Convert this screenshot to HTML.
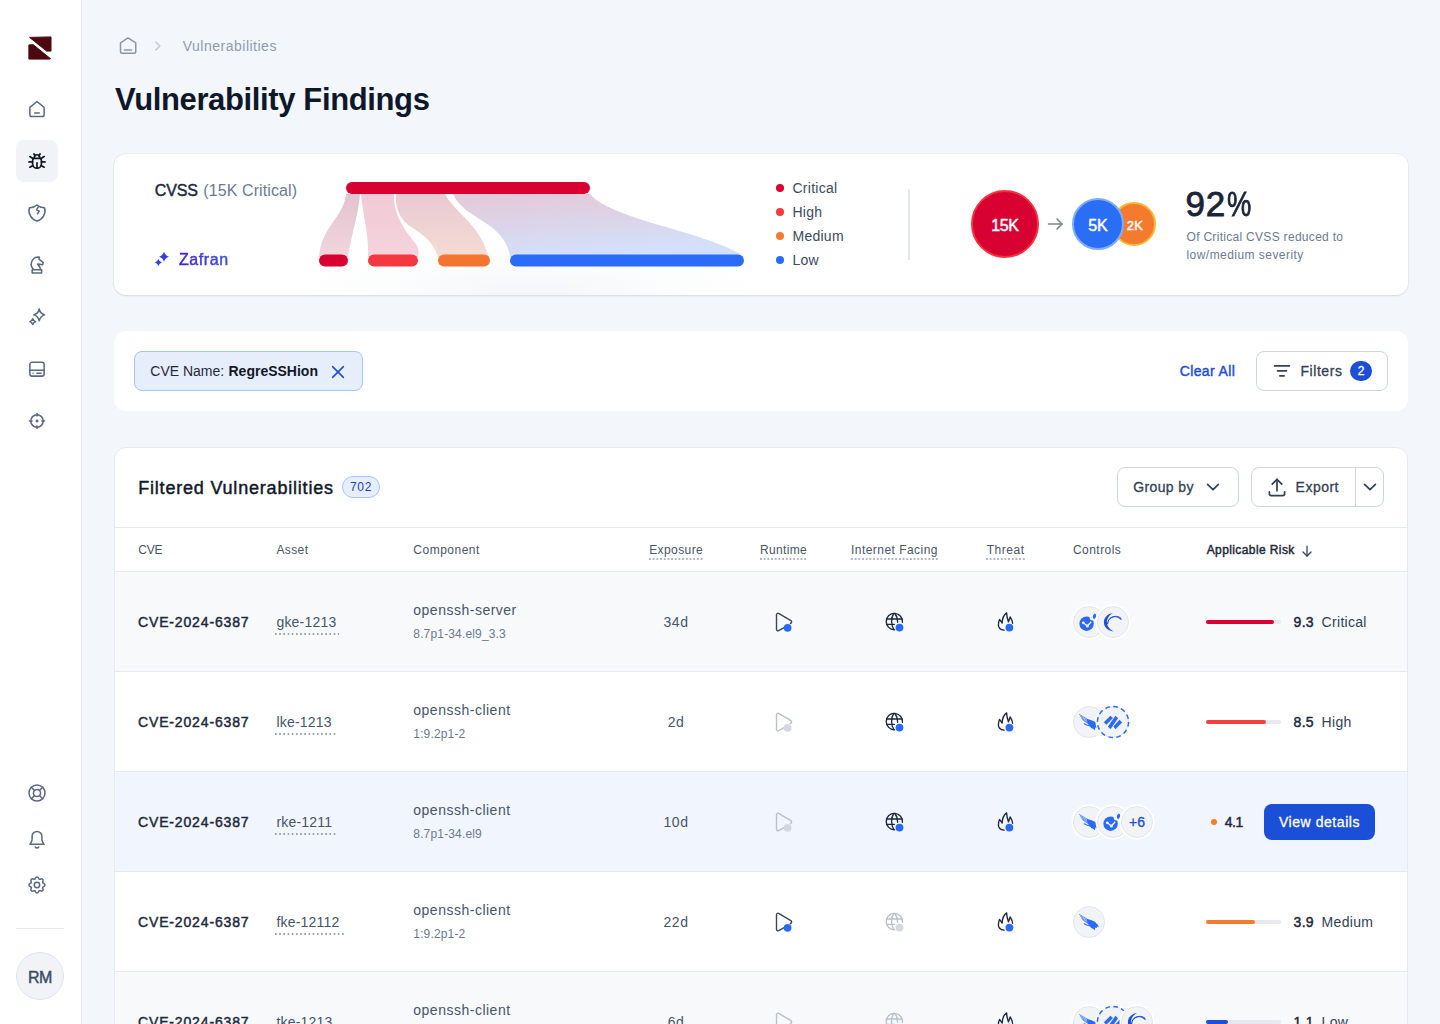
<!DOCTYPE html>
<html><head><meta charset="utf-8"><title>Vulnerability Findings</title>
<style>
html,body{margin:0;padding:0;}
body{width:1440px;height:1024px;overflow:hidden;position:relative;background:#f3f6fa;font-family:"Liberation Sans", sans-serif;}
.a{position:absolute;box-sizing:content-box;}
.t{position:absolute;line-height:1;white-space:nowrap;}
.card{background:#fff;border:1px solid #e8ebf0;border-radius:12px;box-shadow:0 1px 2px rgba(16,24,40,0.04);}
.circ{border-radius:50%;}
.ctl{width:30px;height:30px;background:#f1f3f6;border:1px solid #e3e6eb;box-shadow:0 0 0 1.5px #fff;}
.dots{background-image:linear-gradient(90deg,#aeb6c2 0,#aeb6c2 1.8px,transparent 1.8px);background-size:3.7px 2px;}
.dots2{background-image:linear-gradient(90deg,#9aa3b2 0,#9aa3b2 2px,transparent 2px);background-size:4.2px 2px;}
</style></head><body>
<div class="a" style="left:0;top:0;width:81px;height:1024px;background:#fff;border-right:1px solid #e6e9ef"></div>
<svg class="a" style="left:28px;top:36px;" width="24" height="24" viewBox="0 0 24 24" fill="none"><g fill="#4b0810" stroke="#4b0810" stroke-width="1" stroke-linejoin="round"><path d="M1.6 1.4 L23 0.9 L23 15.1 L18.6 15.1 Z"/><path d="M0.9 8.9 L5.3 8.7 L22.5 22.7 L21.6 23.1 L0.9 23.1 Z"/></g></svg>
<svg class="a" style="left:27px;top:98.5px;" width="20" height="20" viewBox="0 0 20 20" fill="none"><g stroke="#5a6882" stroke-width="1.7" stroke-linecap="round" stroke-linejoin="round" transform="translate(10 10) scale(0.89) translate(-12 -12)"><path d="M4 10.2 L12 3.6 L20 10.2 V18.5 A2 2 0 0 1 18 20.5 H6 A2 2 0 0 1 4 18.5 Z"/><path d="M9.5 16.5 H14.5"/></g></svg>
<div class="a" style="left:16px;top:140px;width:42px;height:42px;border-radius:8px;background:#f1f3f7"></div>
<svg class="a" style="left:27px;top:151px;" width="20" height="20" viewBox="0 0 20 20" fill="none"><g stroke="#111827" stroke-width="1.9" stroke-linecap="round" stroke-linejoin="round" transform="translate(10 10) scale(0.89) translate(-12 -12)"><path d="M9 8.5v-0.5a3 3 0 0 1 6 0v0.5"/><path d="M8.5 4 L10 6"/><path d="M15.5 4 L14 6"/><path d="M8 9h8a6 6 0 0 1 1 3v3a5 5 0 0 1 -10 0v-3a6 6 0 0 1 1 -3"/><path d="M3 13h4"/><path d="M17 13h4"/><path d="M12 20v-6"/><path d="M4 19l3.35 -2"/><path d="M20 19l-3.35 -2"/><path d="M4 7l3.75 2.4"/><path d="M20 7l-3.75 2.4"/></g></svg>
<svg class="a" style="left:27px;top:203px;" width="20" height="20" viewBox="0 0 20 20" fill="none"><g stroke="#5a6882" stroke-width="1.7" stroke-linecap="round" stroke-linejoin="round" transform="translate(10 10) scale(0.89) translate(-12 -12)"><path d="M12 3a12 12 0 0 0 8.5 3a12 12 0 0 1 -8.5 15a12 12 0 0 1 -8.5 -15a12 12 0 0 0 8.5 -3"/><path d="M13.5 5 L11.5 8.5 L14.5 10 L12.5 13"/></g></svg>
<svg class="a" style="left:27px;top:255px;" width="20" height="20" viewBox="0 0 20 20" fill="none"><g stroke="#5a6882" stroke-width="1.7" stroke-linecap="round" stroke-linejoin="round" transform="translate(10 10) scale(0.89) translate(-12 -12)"><path d="M7.6 16.3 C5.6 14 5 12 5.6 10 C6.5 5.5 10 3.2 13.1 3 L14.8 3.3 L14.2 5.4 L19 9.3 L18.5 11.6 L12.6 10.8 L15.1 14.2 L15.8 16.5"/><path d="M6.6 17.3 H17.2 V21 H6.6 Z"/></g></svg>
<svg class="a" style="left:27px;top:307px;" width="20" height="20" viewBox="0 0 20 20" fill="none"><g stroke="#5a6882" stroke-width="1.7" stroke-linecap="round" stroke-linejoin="round" transform="translate(10 10) scale(0.89) translate(-12 -12)"><path d="M14.5 3 Q15.6 8.2 20.6 9.6 Q15.6 11 14.5 16.2 Q13.4 11 8.4 9.6 Q13.4 8.2 14.5 3Z"/><path d="M7.2 14 Q7.9 16.4 10.4 17.2 Q7.9 18 7.2 20.4 Q6.5 18 4 17.2 Q6.5 16.4 7.2 14Z"/></g></svg>
<svg class="a" style="left:27px;top:359px;" width="20" height="20" viewBox="0 0 20 20" fill="none"><g stroke="#5a6882" stroke-width="1.7" stroke-linecap="round" stroke-linejoin="round" transform="translate(10 10) scale(0.89) translate(-12 -12)"><path d="M6.5 4.5 H17.5 A2.5 2.5 0 0 1 20 7 V17.5 A2.5 2.5 0 0 1 17.5 20 H6.5 A2.5 2.5 0 0 1 4 17.5 V7 A2.5 2.5 0 0 1 6.5 4.5Z"/><path d="M4 13.5 H20"/><path d="M7.5 16.8 h0.01"/><path d="M12 16.8 H16.5"/></g></svg>
<svg class="a" style="left:27px;top:411px;" width="20" height="20" viewBox="0 0 20 20" fill="none"><g stroke="#5a6882" stroke-width="1.7" stroke-linecap="round" stroke-linejoin="round" transform="translate(10 10) scale(0.89) translate(-12 -12)"><circle cx="12" cy="12" r="7"/><path d="M12 3.5v3"/><path d="M12 17.5v3"/><path d="M3.5 12h3"/><path d="M17.5 12h3"/><circle cx="12" cy="12" r="0.8" fill="#5a6882"/></g></svg>
<svg class="a" style="left:27px;top:783px;" width="20" height="20" viewBox="0 0 20 20" fill="none"><g stroke="#5a6882" stroke-width="1.7" stroke-linecap="round" stroke-linejoin="round" transform="translate(10 10) scale(0.89) translate(-12 -12)"><circle cx="12" cy="12" r="9"/><circle cx="12" cy="12" r="4"/><path d="M5.6 5.6l3.6 3.6"/><path d="M14.8 14.8l3.6 3.6"/><path d="M14.8 9.2l3.6 -3.6"/><path d="M5.6 18.4l3.6 -3.6"/></g></svg>
<svg class="a" style="left:27px;top:829px;" width="20" height="20" viewBox="0 0 20 20" fill="none"><g stroke="#5a6882" stroke-width="1.7" stroke-linecap="round" stroke-linejoin="round" transform="translate(10 10) scale(0.89) translate(-12 -12)"><path d="M6.5 9a5.5 5.5 0 0 1 11 0v3.5c0 2 1 3.5 2.5 5.5H4c1.5 -2 2.5 -3.5 2.5 -5.5Z"/><path d="M10 21a2.5 2.5 0 0 0 4 0"/></g></svg>
<svg class="a" style="left:27px;top:875px;" width="20" height="20" viewBox="0 0 20 20" fill="none"><g stroke="#5a6882" stroke-width="1.7" stroke-linecap="round" stroke-linejoin="round" transform="translate(10 10) scale(0.89) translate(-12 -12)"><path d="M10.325 4.317c.426 -1.756 2.924 -1.756 3.35 0a1.724 1.724 0 0 0 2.573 1.066c1.543 -.94 3.31 .826 2.37 2.37a1.724 1.724 0 0 0 1.065 2.572c1.756 .426 1.756 2.924 0 3.35a1.724 1.724 0 0 0 -1.066 2.573c.94 1.543 -.826 3.31 -2.37 2.37a1.724 1.724 0 0 0 -2.572 1.065c-.426 1.756 -2.924 1.756 -3.35 0a1.724 1.724 0 0 0 -2.573 -1.066c-1.543 .94 -3.31 -.826 -2.37 -2.37a1.724 1.724 0 0 0 -1.065 -2.572c-1.756 -.426 -1.756 -2.924 0 -3.35a1.724 1.724 0 0 0 1.066 -2.573c-.94 -1.543 .826 -3.31 2.37 -2.37c1 .608 2.296 .07 2.572 -1.065z"/><circle cx="12" cy="12" r="3"/></g></svg>
<div class="a" style="left:16px;top:928px;width:48px;height:1px;background:#e5e7eb"></div>
<div class="a" style="left:16px;top:952px;width:46px;height:46px;border-radius:50%;background:#f1f3f6;border:1px solid #e2e5ea"></div>
<div class="t" style="left:-160px;width:400px;text-align:center;top:969.76px;font-size:16px;color:#3e4c63;font-weight:normal;letter-spacing:-0.4px;-webkit-text-stroke:0.45px currentColor;">RM</div>
<svg class="a" style="left:118px;top:35px;" width="20" height="20" viewBox="0 0 20 20" fill="none"><g stroke="#8a96a8" stroke-width="1.5" stroke-linecap="round" stroke-linejoin="round"><path d="M2.5 7.8 L10 2.85 L17.75 7.8 V16.5 Q17.75 18.25 16 18.25 H4.25 Q2.5 18.25 2.5 16.5 Z"/><path d="M6.5 15 H13.5"/></g></svg>
<svg class="a" style="left:150px;top:36px;" width="16" height="20" viewBox="0 0 16 20" fill="none"><path d="M5.75 6.25 L9.9 10 L5.75 13.9" stroke="#c5ccd6" stroke-width="1.5" stroke-linecap="round" stroke-linejoin="round"/></svg>
<div class="t" style="left:182.75px;top:39.15px;font-size:14px;color:#8f9bb0;font-weight:normal;letter-spacing:0.5px;">Vulnerabilities</div>
<div class="t" style="left:115px;top:83.96px;font-size:31px;color:#0f172a;font-weight:bold;letter-spacing:-0.37px;">Vulnerability Findings</div>
<div class="a" style="left:114px;top:154px;width:1294px;height:141px;background:#fff;border-radius:12px;box-shadow:0 0 0 1px rgba(30,40,70,0.035),0 1px 2px rgba(30,40,70,0.09);"></div>
<div class="a" style="left:290px;top:236px;width:480px;height:59px;background:radial-gradient(ellipse 50% 100% at 50% 100%, rgba(236,239,244,0.6), rgba(243,245,248,0.3) 55%, rgba(255,255,255,0) 100%);"></div>
<div class="t" style="left:154.8px;top:183.06px;font-size:16px;color:#1e293b;font-weight:normal;letter-spacing:-0.15px;-webkit-text-stroke:0.45px currentColor;">CVSS</div>
<div class="t" style="left:203.3px;top:183.06px;font-size:16px;color:#6b7a90;font-weight:normal;letter-spacing:0.1px;">(15K Critical)</div>
<svg class="a" style="left:154px;top:251px;" width="16" height="16" viewBox="0 0 16 16" fill="none"><defs><linearGradient id="zg" x1="0" y1="1" x2="1" y2="0"><stop offset="0" stop-color="#3b3bf0"/><stop offset="1" stop-color="#2f3fe0"/></linearGradient></defs><path d="M10 0.80 Q11.20 4.60 15.00 5.8 Q11.20 7.00 10 10.80 Q8.80 7.00 5.00 5.8 Q8.80 4.60 10 0.80Z" fill="url(#zg)"/><path d="M4.4 8.10 Q5.24 10.76 7.90 11.6 Q5.24 12.44 4.4 15.10 Q3.56 12.44 0.90 11.6 Q3.56 10.76 4.4 8.10Z" fill="url(#zg)"/></svg>
<div class="t" style="left:178.9px;top:252.06px;font-size:16px;color:#3b2fd6;font-weight:normal;letter-spacing:0.6px;-webkit-text-stroke:0.45px currentColor;background:linear-gradient(90deg,#4a1fd0,#2f55e0);-webkit-background-clip:text;background-clip:text;color:transparent;">Zafran</div>
<svg class="a" style="left:319px;top:182px;" width="430" height="90" viewBox="0 0 430 90" fill="none"><defs>
<linearGradient id="f1" x1="0" y1="0" x2="0" y2="1"><stop offset="0" stop-color="#e2c3cf"/><stop offset="1" stop-color="#f1d6de"/></linearGradient>
<linearGradient id="f2" x1="0" y1="0" x2="0" y2="1"><stop offset="0" stop-color="#f0c9d5"/><stop offset="1" stop-color="#f6d3dc"/></linearGradient>
<linearGradient id="f3" x1="0" y1="0" x2="0" y2="1"><stop offset="0" stop-color="#e8c9d2"/><stop offset="1" stop-color="#f5dcd3"/></linearGradient>
<linearGradient id="f4" x1="0" y1="0" x2="0.3" y2="1"><stop offset="0" stop-color="#e5c8d6"/><stop offset="1" stop-color="#d3e0fb"/></linearGradient>
<linearGradient id="sh" x1="0" y1="0" x2="0" y2="1"><stop offset="0" stop-color="#ffffff" stop-opacity="0"/><stop offset="1" stop-color="#eef0f5" stop-opacity="1"/></linearGradient>
</defs>
<path d="M27 12 L41 12 C40 30 33 50 29 75 L0 75 C2 45 25 35 27 12Z" fill="url(#f1)"/>
<path d="M42 12 L75 12 C74 30 83 45 97 62 C100 67 100 72 99 75 L49 75 C50 50 44 35 42 12Z" fill="url(#f2)"/>
<path d="M77 12 L126 12 C136 30 155 40 165 62 L170 75 L119 75 C115 60 103 52 92 45 C80 37 76 25 77 12Z" fill="url(#f3)"/>
<path d="M134 12 L271 12 C285 30 340 42 380 55 C410 65 422 72 425 75 L191 75 C189 60 180 50 168 42 C150 30 140 25 134 12Z" fill="url(#f4)"/>
<rect x="27" y="0" width="244" height="12" rx="6" fill="#d90032"/>
<rect x="0" y="72.5" width="29" height="12" rx="6" fill="#d90032"/>
<rect x="49" y="72.5" width="50" height="12" rx="6" fill="#f5383f"/>
<rect x="119" y="72.5" width="52" height="12" rx="6" fill="#f47530"/>
<rect x="191" y="72.5" width="234" height="12" rx="6" fill="#2a6cf8"/>
</svg>
<div class="a" style="left:776px;top:184px;width:8px;height:8px;border-radius:50%;background:#d90032"></div>
<div class="t" style="left:792.5px;top:181.15px;font-size:14px;color:#3d4a5c;font-weight:normal;letter-spacing:0.25px;">Critical</div>
<div class="a" style="left:776px;top:208px;width:8px;height:8px;border-radius:50%;background:#f5383f"></div>
<div class="t" style="left:792.5px;top:205.15px;font-size:14px;color:#3d4a5c;font-weight:normal;letter-spacing:0.25px;">High</div>
<div class="a" style="left:776px;top:232px;width:8px;height:8px;border-radius:50%;background:#f47a2e"></div>
<div class="t" style="left:792.5px;top:229.15px;font-size:14px;color:#3d4a5c;font-weight:normal;letter-spacing:0.25px;">Medium</div>
<div class="a" style="left:776px;top:256px;width:8px;height:8px;border-radius:50%;background:#2a6cf8"></div>
<div class="t" style="left:792.5px;top:253.15px;font-size:14px;color:#3d4a5c;font-weight:normal;letter-spacing:0.25px;">Low</div>
<div class="a" style="left:908px;top:189px;width:2px;height:71px;background:#e3e7ee"></div>
<div class="a circ" style="left:971px;top:190px;width:64px;height:64px;background:#d90032;border:2px solid #f5333f;"></div>
<div class="t" style="left:805px;width:400px;text-align:center;top:217.76px;font-size:16px;color:#fff;font-weight:normal;letter-spacing:-0.4px;-webkit-text-stroke:0.45px currentColor;">15K</div>
<svg class="a" style="left:1045px;top:214px;" width="20" height="20" viewBox="0 0 20 20" fill="none"><g stroke="#7b8796" stroke-width="1.6" stroke-linecap="round" stroke-linejoin="round"><path d="M3.5 10 H17"/><path d="M12 5 L17 10 L12 15"/></g></svg>
<div class="a circ" style="left:1112px;top:202px;width:40px;height:40px;background:#f47a2e;border:2px solid #fbb731;"></div>
<div class="a circ" style="left:1072px;top:198px;width:48px;height:48px;background:#2a6ef6;border:2px solid #7eadfb;"></div>
<div class="t" style="left:898px;width:400px;text-align:center;top:217.76px;font-size:16px;color:#fff;font-weight:normal;letter-spacing:0px;-webkit-text-stroke:0.45px currentColor;">5K</div>
<div class="t" style="left:935px;width:400px;text-align:center;top:219.00px;font-size:13px;color:#fff;font-weight:normal;letter-spacing:0.3px;-webkit-text-stroke:0.45px currentColor;">2K</div>
<div class="t" style="left:1185.6px;top:186.27px;font-size:35px;color:#1b2436;font-weight:normal;letter-spacing:0.6px;-webkit-text-stroke:0.8px currentColor;">92<span style="display:inline-block;transform:scaleX(0.78);transform-origin:0 50%;margin-left:1px">%</span></div>
<div class="t" style="left:1186.5px;top:231.14px;font-size:12px;color:#6b7a90;font-weight:normal;letter-spacing:0.3px;">Of Critical CVSS reduced to</div>
<div class="t" style="left:1186.5px;top:249.14px;font-size:12px;color:#6b7a90;font-weight:normal;letter-spacing:0.45px;">low/medium severity</div>
<div class="a" style="left:114px;top:331px;width:1294px;height:80px;background:#fff;border-radius:12px;"></div>
<div class="a" style="left:134px;top:351px;width:227px;height:38px;border-radius:8px;background:#e6eefc;border:1px solid #a6c6f7"></div>
<div class="t" style="left:150.3px;top:364.15px;font-size:14px;color:#1e293b;font-weight:normal;letter-spacing:0.0px;white-space:pre">CVE Name: </div>
<div class="t" style="left:228.5px;top:364.15px;font-size:14px;color:#111827;font-weight:bold;letter-spacing:0px;">RegreSSHion</div>
<svg class="a" style="left:329.6px;top:363.6px;" width="16" height="16" viewBox="0 0 16 16" fill="none"><g stroke="#1d4ed8" stroke-width="1.55" stroke-linecap="round"><path d="M2.6 2.6 L13.4 13.4"/><path d="M13.4 2.6 L2.6 13.4"/></g></svg>
<div class="t" style="left:1179.7px;top:363.95px;font-size:14px;color:#1d4ed8;font-weight:normal;letter-spacing:0.39px;-webkit-text-stroke:0.45px currentColor;">Clear All</div>
<div class="a" style="left:1256px;top:351px;width:130px;height:38px;border-radius:8px;background:#fff;border:1px solid #cfd5de"></div>
<svg class="a" style="left:1272px;top:362px;" width="20" height="18" viewBox="0 0 20 18" fill="none"><g stroke="#334155" stroke-width="1.8" stroke-linecap="round"><path d="M2.6 3.8 H17.4"/><path d="M5.6 8.8 H14.4"/><path d="M7.9 13.8 H12.1"/></g></svg>
<div class="t" style="left:1300.5px;top:363.95px;font-size:14px;color:#334155;font-weight:normal;letter-spacing:0.55px;-webkit-text-stroke:0.3px currentColor;">Filters</div>
<div class="a" style="left:1350px;top:361px;width:22px;height:20px;border-radius:10px;background:#1d4ed8"></div>
<div class="t" style="left:1161px;width:400px;text-align:center;top:365.34px;font-size:12px;color:#fff;font-weight:normal;letter-spacing:0px;-webkit-text-stroke:0.3px currentColor;">2</div>
<div class="a" style="left:114px;top:447px;width:1292px;height:600px;background:#fff;border:1px solid #e6e9ee;border-radius:12px;"></div>
<div class="t" style="left:138.2px;top:478.76px;font-size:18px;color:#111827;font-weight:normal;letter-spacing:0.8px;-webkit-text-stroke:0.45px currentColor;">Filtered Vulnerabilities</div>
<div class="a" style="left:342px;top:476px;width:36px;height:20px;border-radius:11px;background:#e6eefc;border:1px solid #a6c6f7"></div>
<div class="t" style="left:161px;width:400px;text-align:center;top:481.04px;font-size:12px;color:#1e3fae;font-weight:normal;letter-spacing:0.6px;">702</div>
<div class="a" style="left:1117px;top:467px;width:120px;height:38px;border-radius:8px;background:#fff;border:1px solid #cfd5de"></div>
<div class="t" style="left:1133.3px;top:480.15px;font-size:14px;color:#334155;font-weight:normal;letter-spacing:0.36px;-webkit-text-stroke:0.3px currentColor;">Group by</div>
<svg class="a" style="left:1203px;top:477px;" width="20" height="20" viewBox="0 0 20 20" fill="none"><g stroke="#334155" stroke-width="1.9" stroke-linecap="round" stroke-linejoin="round" transform="translate(10 10) scale(0.9) translate(-12 -12)"><path d="M6 9l6 6l6 -6"/></g></svg>
<div class="a" style="left:1251px;top:467px;width:131px;height:38px;border-radius:8px;background:#fff;border:1px solid #cfd5de"></div>
<div class="a" style="left:1355px;top:468px;width:1px;height:38px;background:#cfd5de"></div>
<svg class="a" style="left:1266.8px;top:476.8px;" width="20" height="20" viewBox="0 0 20 20" fill="none"><g stroke="#334155" stroke-width="1.8" stroke-linecap="round" stroke-linejoin="round" transform="translate(10 10) scale(0.95) translate(-12 -12)"><path d="M4 17v2a2 2 0 0 0 2 2h12a2 2 0 0 0 2 -2v-2"/><path d="M7 9l5 -5l5 5"/><path d="M12 4v12"/></g></svg>
<div class="t" style="left:1295.6px;top:480.15px;font-size:14px;color:#334155;font-weight:normal;letter-spacing:0.49px;-webkit-text-stroke:0.3px currentColor;">Export</div>
<svg class="a" style="left:1360px;top:477px;" width="20" height="20" viewBox="0 0 20 20" fill="none"><g stroke="#334155" stroke-width="1.9" stroke-linecap="round" stroke-linejoin="round" transform="translate(10 10) scale(0.9) translate(-12 -12)"><path d="M6 9l6 6l6 -6"/></g></svg>
<div class="a" style="left:115px;top:527px;width:1292px;height:1px;background:#e6e9ee"></div>
<div class="a" style="left:115px;top:571px;width:1292px;height:1px;background:#e6e9ee"></div>
<div class="t" style="left:138.3px;top:544.04px;font-size:12px;color:#4a5568;font-weight:normal;letter-spacing:-0.2px;">CVE</div>
<div class="t" style="left:276.4px;top:544.04px;font-size:12px;color:#4a5568;font-weight:normal;letter-spacing:0.4px;">Asset</div>
<div class="t" style="left:413.3px;top:544.04px;font-size:12px;color:#4a5568;font-weight:normal;letter-spacing:0.5px;">Component</div>
<div class="t" style="left:649.2px;top:544.04px;font-size:12px;color:#4a5568;font-weight:normal;letter-spacing:0.41px;">Exposure</div><div class="a dots" style="left:648.7px;top:558px;width:55px;height:2px;"></div>
<div class="t" style="left:760px;top:544.04px;font-size:12px;color:#4a5568;font-weight:normal;letter-spacing:0.33px;">Runtime</div><div class="a dots" style="left:759.5px;top:558px;width:48px;height:2px;"></div>
<div class="t" style="left:851px;top:544.04px;font-size:12px;color:#4a5568;font-weight:normal;letter-spacing:0.46px;">Internet Facing</div><div class="a dots" style="left:850.5px;top:558px;width:88px;height:2px;"></div>
<div class="t" style="left:986.7px;top:544.04px;font-size:12px;color:#4a5568;font-weight:normal;letter-spacing:0.55px;">Threat</div><div class="a dots" style="left:986.2px;top:558px;width:39px;height:2px;"></div>
<div class="t" style="left:1073px;top:544.04px;font-size:12px;color:#4a5568;font-weight:normal;letter-spacing:0.45px;">Controls</div>
<div class="t" style="left:1206.7px;top:544.04px;font-size:12px;color:#1e293b;font-weight:normal;letter-spacing:0.4px;-webkit-text-stroke:0.45px currentColor;">Applicable Risk</div>
<svg class="a" style="left:1300px;top:544px;" width="14" height="14" viewBox="0 0 14 14" fill="none"><g stroke="#334155" stroke-width="1.25" stroke-linecap="round" stroke-linejoin="round"><path d="M7 2 V12"/><path d="M3 8 L7 12 L11 8"/></g></svg>
<div class="a" style="left:115px;top:572px;width:1292px;height:99px;background:#f8f9fb"></div>
<div class="a" style="left:115px;top:671px;width:1292px;height:1px;background:#e6e9ee"></div>
<div class="t" style="left:138px;top:615.35px;font-size:14px;color:#1e293b;font-weight:normal;letter-spacing:0.85px;-webkit-text-stroke:0.45px currentColor;">CVE-2024-6387</div>
<div class="t" style="left:276.4px;top:615.15px;font-size:14px;color:#475569;font-weight:normal;letter-spacing:0.2px;">gke-1213</div>
<div class="a dots2" style="left:275px;top:633px;width:64px;height:2px;"></div>
<div class="t" style="left:413.3px;top:603.45px;font-size:14px;color:#475569;font-weight:normal;letter-spacing:0.5px;">openssh-server</div>
<div class="t" style="left:413.3px;top:628.14px;font-size:12px;color:#6b7a90;font-weight:normal;letter-spacing:0.16px;">8.7p1-34.el9_3.3</div>
<div class="t" style="left:476px;width:400px;text-align:center;top:615.35px;font-size:14px;color:#475569;font-weight:normal;letter-spacing:0.5px;">34d</div>
<svg class="a" style="left:773.5px;top:611.5px;" width="20" height="20" viewBox="0 0 20 20" fill="none"><path d="M10.2 15.6 L4.6 18.7 A1.5 1.5 0 0 1 2.5 17.4 V2.7 A1.5 1.5 0 0 1 4.6 1.4 L16.9 8.6 A1.5 1.5 0 0 1 17.2 10.9 L16.4 11.6" stroke="#3b4658" stroke-width="1.4" stroke-linecap="round" stroke-linejoin="round" fill="none"/><circle cx="13.6" cy="15.8" r="4.9" fill="#fff" fill-opacity="0"/><circle cx="13.6" cy="15.8" r="3.9" fill="#2a6af7"/></svg>
<svg class="a" style="left:884px;top:611.5px;" width="20" height="20" viewBox="0 0 20 20" fill="none"><g stroke="#1e293b" stroke-width="1.35" stroke-linecap="round" fill="none"><path d="M10.6 17.7 A8.15 8.15 0 1 1 18.45 10.4"/><path d="M2.6 7 H18"/><path d="M2.6 12.4 H10.4"/><path d="M9.8 1.5 C6.8 5.5 6.8 13.5 10 17.6"/><path d="M10.9 1.5 C13 4.2 13.6 7.2 13.6 10.2"/></g><circle cx="15.5" cy="15.6" r="3.9" fill="#2a6af7"/></svg>
<svg class="a" style="left:995px;top:611.5px;" width="20" height="20" viewBox="0 0 20 20" fill="none"><path d="M9.1 18.1 C5.5 17.6 3.4 15.5 3.4 12.9 C3.4 10.8 3.8 9 4.5 7.4 L7.2 11 C7.2 6.5 8.8 3 11.6 0.9 C11.8 4.5 12.5 7.5 13.5 9.9 L15.1 5 C16.5 7 17.4 9 17.6 11.3" stroke="#1e293b" stroke-width="1.35" stroke-linecap="round" stroke-linejoin="round" fill="none"/><circle cx="14.4" cy="15.6" r="3.9" fill="#2a6af7"/></svg>
<div class="a circ ctl" style="left:1073px;top:606.0px;"></div><svg class="a" style="left:1079px;top:611.5px;" width="20" height="20" viewBox="0 0 20 20" fill="none"><defs><mask id="mo"><rect width="20" height="20" fill="#fff"/><circle cx="13.8" cy="5.2" r="3.2" fill="#000"/></mask></defs><circle cx="7.6" cy="11.7" r="7.2" fill="#2a6af7" mask="url(#mo)"/><path d="M15.6 1.4 C17.4 1.8 17.6 4 16.6 5.6 L15.2 7.2 C13.8 6.6 13.4 4.8 14.2 3.2 Z" fill="#2a6af7"/><g stroke="#f1f3f6" stroke-width="1.3" stroke-linecap="round"><path d="M4.3 10.8 L8.4 14 L11.8 10.2"/></g><circle cx="4.3" cy="10.8" r="1.4" fill="#f1f3f6"/><circle cx="8.4" cy="14" r="1.5" fill="#f1f3f6"/></svg>
<div class="a circ ctl" style="left:1097px;top:606.0px;"></div><svg class="a" style="left:1103px;top:611.5px;" width="20" height="20" viewBox="0 0 20 20" fill="none"><path d="M10 0.9 C4.6 1.6 0.9 5.6 0.9 10.2 C0.9 15 4.8 18.8 10.8 19.4 C6.4 17.4 3.9 14.2 3.9 10.3 C3.9 6.3 6.3 2.9 10 0.9 Z" fill="#1d4ed8"/><g stroke="#1d4ed8" fill="none" stroke-linecap="round"><path d="M4.6 11.6 C5.2 5.4 12.6 1.8 18.2 7.2" stroke-width="1.2"/><path d="M7 6.6 C9.6 3.8 14.6 3.6 17.6 5.8" stroke-width="0.8"/></g></svg>
<div class="a" style="left:1206px;top:620.0px;width:75px;height:4px;border-radius:2px;background:#e7e9ee"></div>
<div class="a" style="left:1206px;top:620.0px;width:67.7px;height:4px;border-radius:2px;background:#dc0032"></div>
<div class="t" style="left:1293.6px;top:615.35px;font-size:14px;color:#1e293b;font-weight:normal;letter-spacing:0.27px;-webkit-text-stroke:0.45px currentColor;">9.3</div>
<div class="t" style="left:1321.6px;top:615.35px;font-size:14px;color:#334155;font-weight:normal;letter-spacing:0.3px;">Critical</div>
<div class="a" style="left:115px;top:672px;width:1292px;height:99px;background:#ffffff"></div>
<div class="a" style="left:115px;top:771px;width:1292px;height:1px;background:#e6e9ee"></div>
<div class="t" style="left:138px;top:715.35px;font-size:14px;color:#1e293b;font-weight:normal;letter-spacing:0.85px;-webkit-text-stroke:0.45px currentColor;">CVE-2024-6387</div>
<div class="t" style="left:276.4px;top:715.15px;font-size:14px;color:#475569;font-weight:normal;letter-spacing:0.2px;">lke-1213</div>
<div class="a dots2" style="left:275px;top:733px;width:61px;height:2px;"></div>
<div class="t" style="left:413.3px;top:703.45px;font-size:14px;color:#475569;font-weight:normal;letter-spacing:0.5px;">openssh-client</div>
<div class="t" style="left:413.3px;top:728.14px;font-size:12px;color:#6b7a90;font-weight:normal;letter-spacing:0.16px;">1:9.2p1-2</div>
<div class="t" style="left:476px;width:400px;text-align:center;top:715.35px;font-size:14px;color:#475569;font-weight:normal;letter-spacing:0.5px;">2d</div>
<svg class="a" style="left:773.5px;top:711.5px;" width="20" height="20" viewBox="0 0 20 20" fill="none"><path d="M10.2 15.6 L4.6 18.7 A1.5 1.5 0 0 1 2.5 17.4 V2.7 A1.5 1.5 0 0 1 4.6 1.4 L16.9 8.6 A1.5 1.5 0 0 1 17.2 10.9 L16.4 11.6" stroke="#b9c0cb" stroke-width="1.4" stroke-linecap="round" stroke-linejoin="round" fill="none"/><circle cx="13.6" cy="15.8" r="4.9" fill="#fff" fill-opacity="0"/><circle cx="13.6" cy="15.8" r="3.9" fill="#d3d7de"/></svg>
<svg class="a" style="left:884px;top:711.5px;" width="20" height="20" viewBox="0 0 20 20" fill="none"><g stroke="#1e293b" stroke-width="1.35" stroke-linecap="round" fill="none"><path d="M10.6 17.7 A8.15 8.15 0 1 1 18.45 10.4"/><path d="M2.6 7 H18"/><path d="M2.6 12.4 H10.4"/><path d="M9.8 1.5 C6.8 5.5 6.8 13.5 10 17.6"/><path d="M10.9 1.5 C13 4.2 13.6 7.2 13.6 10.2"/></g><circle cx="15.5" cy="15.6" r="3.9" fill="#2a6af7"/></svg>
<svg class="a" style="left:995px;top:711.5px;" width="20" height="20" viewBox="0 0 20 20" fill="none"><path d="M9.1 18.1 C5.5 17.6 3.4 15.5 3.4 12.9 C3.4 10.8 3.8 9 4.5 7.4 L7.2 11 C7.2 6.5 8.8 3 11.6 0.9 C11.8 4.5 12.5 7.5 13.5 9.9 L15.1 5 C16.5 7 17.4 9 17.6 11.3" stroke="#1e293b" stroke-width="1.35" stroke-linecap="round" stroke-linejoin="round" fill="none"/><circle cx="14.4" cy="15.6" r="3.9" fill="#2a6af7"/></svg>
<div class="a circ ctl" style="left:1073px;top:706.0px;"></div><svg class="a" style="left:1079px;top:711.5px;" width="20" height="20" viewBox="0 0 20 20" fill="none"><g stroke="#2a6af7" stroke-width="0.85" stroke-linecap="round" opacity="0.85"><path d="M0.6 2.6 L8.6 7.4"/><path d="M1.4 4.2 L8.4 8.8"/><path d="M2.4 6.0 L8.4 10.2"/><path d="M3.6 7.8 L8.6 11.2"/></g><path d="M7.6 6.8 C11 7.6 14.4 8.8 16.6 10.2 L17 11.2 C18.4 12 19.4 13.4 20 15 L18.2 14.6 L17.6 16 L16.4 15.5 L15.8 18.2 C14.6 17.2 13.4 16.4 12.2 16 L11.4 14.4 C10 13.6 9 12.2 8.4 10.6 Z" fill="#2a6af7"/><path d="M5.2 11.8 C7.2 13 9.6 13.8 12 14.2" stroke="#2a6af7" stroke-width="1.1" stroke-linecap="round" fill="none"/></svg>
<div class="a circ ctl" style="left:1097px;top:706.0px;"></div><svg class="a" style="left:1096px;top:705.0px;" width="34" height="34" viewBox="0 0 34 34" fill="none"><circle cx="17" cy="17" r="15.6" stroke="#2a6af7" stroke-width="1.5" stroke-dasharray="4.6 3.55" fill="none"/></svg><svg class="a" style="left:1103px;top:711.5px;" width="20" height="20" viewBox="0 0 20 20" fill="none"><g fill="#2a6af7"><path d="M0.83 10.31 L7.39 3.75 L9.99 6.07 L3.43 12.77 Z"/><path d="M4.93 14.55 L12.45 3.75 L15.05 6.21 L7.53 17.28 Z"/><path d="M10.4 14.41 L16.55 7.85 L19.15 10.45 L12.45 17.28 Z"/></g></svg>
<div class="a" style="left:1206px;top:720.0px;width:75px;height:4px;border-radius:2px;background:#e7e9ee"></div>
<div class="a" style="left:1206px;top:720.0px;width:60px;height:4px;border-radius:2px;background:#f43f3f"></div>
<div class="t" style="left:1293.6px;top:715.35px;font-size:14px;color:#1e293b;font-weight:normal;letter-spacing:0.27px;-webkit-text-stroke:0.45px currentColor;">8.5</div>
<div class="t" style="left:1321.6px;top:715.35px;font-size:14px;color:#334155;font-weight:normal;letter-spacing:0.3px;">High</div>
<div class="a" style="left:115px;top:772px;width:1292px;height:99px;background:#f1f5fe"></div>
<div class="a" style="left:115px;top:871px;width:1292px;height:1px;background:#e6e9ee"></div>
<div class="t" style="left:138px;top:815.35px;font-size:14px;color:#1e293b;font-weight:normal;letter-spacing:0.85px;-webkit-text-stroke:0.45px currentColor;">CVE-2024-6387</div>
<div class="t" style="left:276.4px;top:815.15px;font-size:14px;color:#475569;font-weight:normal;letter-spacing:0.2px;">rke-1211</div>
<div class="a dots2" style="left:275px;top:833px;width:61px;height:2px;"></div>
<div class="t" style="left:413.3px;top:803.45px;font-size:14px;color:#475569;font-weight:normal;letter-spacing:0.5px;">openssh-client</div>
<div class="t" style="left:413.3px;top:828.14px;font-size:12px;color:#6b7a90;font-weight:normal;letter-spacing:0.16px;">8.7p1-34.el9</div>
<div class="t" style="left:476px;width:400px;text-align:center;top:815.35px;font-size:14px;color:#475569;font-weight:normal;letter-spacing:0.5px;">10d</div>
<svg class="a" style="left:773.5px;top:811.5px;" width="20" height="20" viewBox="0 0 20 20" fill="none"><path d="M10.2 15.6 L4.6 18.7 A1.5 1.5 0 0 1 2.5 17.4 V2.7 A1.5 1.5 0 0 1 4.6 1.4 L16.9 8.6 A1.5 1.5 0 0 1 17.2 10.9 L16.4 11.6" stroke="#b9c0cb" stroke-width="1.4" stroke-linecap="round" stroke-linejoin="round" fill="none"/><circle cx="13.6" cy="15.8" r="4.9" fill="#fff" fill-opacity="0"/><circle cx="13.6" cy="15.8" r="3.9" fill="#d3d7de"/></svg>
<svg class="a" style="left:884px;top:811.5px;" width="20" height="20" viewBox="0 0 20 20" fill="none"><g stroke="#1e293b" stroke-width="1.35" stroke-linecap="round" fill="none"><path d="M10.6 17.7 A8.15 8.15 0 1 1 18.45 10.4"/><path d="M2.6 7 H18"/><path d="M2.6 12.4 H10.4"/><path d="M9.8 1.5 C6.8 5.5 6.8 13.5 10 17.6"/><path d="M10.9 1.5 C13 4.2 13.6 7.2 13.6 10.2"/></g><circle cx="15.5" cy="15.6" r="3.9" fill="#2a6af7"/></svg>
<svg class="a" style="left:995px;top:811.5px;" width="20" height="20" viewBox="0 0 20 20" fill="none"><path d="M9.1 18.1 C5.5 17.6 3.4 15.5 3.4 12.9 C3.4 10.8 3.8 9 4.5 7.4 L7.2 11 C7.2 6.5 8.8 3 11.6 0.9 C11.8 4.5 12.5 7.5 13.5 9.9 L15.1 5 C16.5 7 17.4 9 17.6 11.3" stroke="#1e293b" stroke-width="1.35" stroke-linecap="round" stroke-linejoin="round" fill="none"/><circle cx="14.4" cy="15.6" r="3.9" fill="#2a6af7"/></svg>
<div class="a circ ctl" style="left:1073px;top:806.0px;"></div><svg class="a" style="left:1079px;top:811.5px;" width="20" height="20" viewBox="0 0 20 20" fill="none"><g stroke="#2a6af7" stroke-width="0.85" stroke-linecap="round" opacity="0.85"><path d="M0.6 2.6 L8.6 7.4"/><path d="M1.4 4.2 L8.4 8.8"/><path d="M2.4 6.0 L8.4 10.2"/><path d="M3.6 7.8 L8.6 11.2"/></g><path d="M7.6 6.8 C11 7.6 14.4 8.8 16.6 10.2 L17 11.2 C18.4 12 19.4 13.4 20 15 L18.2 14.6 L17.6 16 L16.4 15.5 L15.8 18.2 C14.6 17.2 13.4 16.4 12.2 16 L11.4 14.4 C10 13.6 9 12.2 8.4 10.6 Z" fill="#2a6af7"/><path d="M5.2 11.8 C7.2 13 9.6 13.8 12 14.2" stroke="#2a6af7" stroke-width="1.1" stroke-linecap="round" fill="none"/></svg>
<div class="a circ ctl" style="left:1097px;top:806.0px;"></div><svg class="a" style="left:1103px;top:811.5px;" width="20" height="20" viewBox="0 0 20 20" fill="none"><defs><mask id="mo"><rect width="20" height="20" fill="#fff"/><circle cx="13.8" cy="5.2" r="3.2" fill="#000"/></mask></defs><circle cx="7.6" cy="11.7" r="7.2" fill="#2a6af7" mask="url(#mo)"/><path d="M15.6 1.4 C17.4 1.8 17.6 4 16.6 5.6 L15.2 7.2 C13.8 6.6 13.4 4.8 14.2 3.2 Z" fill="#2a6af7"/><g stroke="#f1f3f6" stroke-width="1.3" stroke-linecap="round"><path d="M4.3 10.8 L8.4 14 L11.8 10.2"/></g><circle cx="4.3" cy="10.8" r="1.4" fill="#f1f3f6"/><circle cx="8.4" cy="14" r="1.5" fill="#f1f3f6"/></svg>
<div class="a circ ctl" style="left:1121px;top:806.0px;"></div><div class="t" style="left:937px;width:400px;text-align:center;top:814.65px;font-size:14px;color:#1d4ed8;font-weight:normal;letter-spacing:0px;-webkit-text-stroke:0.3px currentColor;">+6</div>
<div class="a circ" style="left:1211px;top:818.5px;width:6px;height:6px;background:#f47a2e"></div>
<div class="t" style="left:1224.8px;top:815.35px;font-size:14px;color:#1e293b;font-weight:normal;letter-spacing:-0.5px;-webkit-text-stroke:0.45px currentColor;">4.1</div>
<div class="a" style="left:1264px;top:804.0px;width:111px;height:36px;border-radius:8px;background:#1b4fd8"></div>
<div class="t" style="left:1119.5px;width:400px;text-align:center;top:814.95px;font-size:14px;color:#fff;font-weight:normal;letter-spacing:0.55px;-webkit-text-stroke:0.3px currentColor;">View details</div>
<div class="a" style="left:115px;top:872px;width:1292px;height:99px;background:#ffffff"></div>
<div class="a" style="left:115px;top:971px;width:1292px;height:1px;background:#e6e9ee"></div>
<div class="t" style="left:138px;top:915.35px;font-size:14px;color:#1e293b;font-weight:normal;letter-spacing:0.85px;-webkit-text-stroke:0.45px currentColor;">CVE-2024-6387</div>
<div class="t" style="left:276.4px;top:915.15px;font-size:14px;color:#475569;font-weight:normal;letter-spacing:0.2px;">fke-12112</div>
<div class="a dots2" style="left:275px;top:933px;width:69px;height:2px;"></div>
<div class="t" style="left:413.3px;top:903.45px;font-size:14px;color:#475569;font-weight:normal;letter-spacing:0.5px;">openssh-client</div>
<div class="t" style="left:413.3px;top:928.14px;font-size:12px;color:#6b7a90;font-weight:normal;letter-spacing:0.16px;">1:9.2p1-2</div>
<div class="t" style="left:476px;width:400px;text-align:center;top:915.35px;font-size:14px;color:#475569;font-weight:normal;letter-spacing:0.5px;">22d</div>
<svg class="a" style="left:773.5px;top:911.5px;" width="20" height="20" viewBox="0 0 20 20" fill="none"><path d="M10.2 15.6 L4.6 18.7 A1.5 1.5 0 0 1 2.5 17.4 V2.7 A1.5 1.5 0 0 1 4.6 1.4 L16.9 8.6 A1.5 1.5 0 0 1 17.2 10.9 L16.4 11.6" stroke="#3b4658" stroke-width="1.4" stroke-linecap="round" stroke-linejoin="round" fill="none"/><circle cx="13.6" cy="15.8" r="4.9" fill="#fff" fill-opacity="0"/><circle cx="13.6" cy="15.8" r="3.9" fill="#2a6af7"/></svg>
<svg class="a" style="left:884px;top:911.5px;" width="20" height="20" viewBox="0 0 20 20" fill="none"><g stroke="#b9c0cb" stroke-width="1.35" stroke-linecap="round" fill="none"><path d="M10.6 17.7 A8.15 8.15 0 1 1 18.45 10.4"/><path d="M2.6 7 H18"/><path d="M2.6 12.4 H10.4"/><path d="M9.8 1.5 C6.8 5.5 6.8 13.5 10 17.6"/><path d="M10.9 1.5 C13 4.2 13.6 7.2 13.6 10.2"/></g><circle cx="15.5" cy="15.6" r="3.9" fill="#d3d7de"/></svg>
<svg class="a" style="left:995px;top:911.5px;" width="20" height="20" viewBox="0 0 20 20" fill="none"><path d="M9.1 18.1 C5.5 17.6 3.4 15.5 3.4 12.9 C3.4 10.8 3.8 9 4.5 7.4 L7.2 11 C7.2 6.5 8.8 3 11.6 0.9 C11.8 4.5 12.5 7.5 13.5 9.9 L15.1 5 C16.5 7 17.4 9 17.6 11.3" stroke="#1e293b" stroke-width="1.35" stroke-linecap="round" stroke-linejoin="round" fill="none"/><circle cx="14.4" cy="15.6" r="3.9" fill="#2a6af7"/></svg>
<div class="a circ ctl" style="left:1073px;top:906.0px;"></div><svg class="a" style="left:1079px;top:911.5px;" width="20" height="20" viewBox="0 0 20 20" fill="none"><g stroke="#2a6af7" stroke-width="0.85" stroke-linecap="round" opacity="0.85"><path d="M0.6 2.6 L8.6 7.4"/><path d="M1.4 4.2 L8.4 8.8"/><path d="M2.4 6.0 L8.4 10.2"/><path d="M3.6 7.8 L8.6 11.2"/></g><path d="M7.6 6.8 C11 7.6 14.4 8.8 16.6 10.2 L17 11.2 C18.4 12 19.4 13.4 20 15 L18.2 14.6 L17.6 16 L16.4 15.5 L15.8 18.2 C14.6 17.2 13.4 16.4 12.2 16 L11.4 14.4 C10 13.6 9 12.2 8.4 10.6 Z" fill="#2a6af7"/><path d="M5.2 11.8 C7.2 13 9.6 13.8 12 14.2" stroke="#2a6af7" stroke-width="1.1" stroke-linecap="round" fill="none"/></svg>
<div class="a" style="left:1206px;top:920.0px;width:75px;height:4px;border-radius:2px;background:#e7e9ee"></div>
<div class="a" style="left:1206px;top:920.0px;width:48.6px;height:4px;border-radius:2px;background:#f47a2e"></div>
<div class="t" style="left:1293.6px;top:915.35px;font-size:14px;color:#1e293b;font-weight:normal;letter-spacing:0.27px;-webkit-text-stroke:0.45px currentColor;">3.9</div>
<div class="t" style="left:1321.6px;top:915.35px;font-size:14px;color:#334155;font-weight:normal;letter-spacing:0.3px;">Medium</div>
<div class="a" style="left:115px;top:972px;width:1292px;height:99px;background:#f8f9fb"></div>
<div class="a" style="left:115px;top:1071px;width:1292px;height:1px;background:#e6e9ee"></div>
<div class="t" style="left:138px;top:1015.35px;font-size:14px;color:#1e293b;font-weight:normal;letter-spacing:0.85px;-webkit-text-stroke:0.45px currentColor;">CVE-2024-6387</div>
<div class="t" style="left:276.4px;top:1015.15px;font-size:14px;color:#475569;font-weight:normal;letter-spacing:0.2px;">tke-1213</div>
<div class="a dots2" style="left:275px;top:1033px;width:61px;height:2px;"></div>
<div class="t" style="left:413.3px;top:1003.45px;font-size:14px;color:#475569;font-weight:normal;letter-spacing:0.5px;">openssh-client</div>
<div class="t" style="left:413.3px;top:1028.14px;font-size:12px;color:#6b7a90;font-weight:normal;letter-spacing:0.16px;">1:9.2p1-2</div>
<div class="t" style="left:476px;width:400px;text-align:center;top:1015.35px;font-size:14px;color:#475569;font-weight:normal;letter-spacing:0.5px;">6d</div>
<svg class="a" style="left:773.5px;top:1011.5px;" width="20" height="20" viewBox="0 0 20 20" fill="none"><path d="M10.2 15.6 L4.6 18.7 A1.5 1.5 0 0 1 2.5 17.4 V2.7 A1.5 1.5 0 0 1 4.6 1.4 L16.9 8.6 A1.5 1.5 0 0 1 17.2 10.9 L16.4 11.6" stroke="#b9c0cb" stroke-width="1.4" stroke-linecap="round" stroke-linejoin="round" fill="none"/><circle cx="13.6" cy="15.8" r="4.9" fill="#fff" fill-opacity="0"/><circle cx="13.6" cy="15.8" r="3.9" fill="#d3d7de"/></svg>
<svg class="a" style="left:884px;top:1011.5px;" width="20" height="20" viewBox="0 0 20 20" fill="none"><g stroke="#b9c0cb" stroke-width="1.35" stroke-linecap="round" fill="none"><path d="M10.6 17.7 A8.15 8.15 0 1 1 18.45 10.4"/><path d="M2.6 7 H18"/><path d="M2.6 12.4 H10.4"/><path d="M9.8 1.5 C6.8 5.5 6.8 13.5 10 17.6"/><path d="M10.9 1.5 C13 4.2 13.6 7.2 13.6 10.2"/></g><circle cx="15.5" cy="15.6" r="3.9" fill="#d3d7de"/></svg>
<svg class="a" style="left:995px;top:1011.5px;" width="20" height="20" viewBox="0 0 20 20" fill="none"><path d="M9.1 18.1 C5.5 17.6 3.4 15.5 3.4 12.9 C3.4 10.8 3.8 9 4.5 7.4 L7.2 11 C7.2 6.5 8.8 3 11.6 0.9 C11.8 4.5 12.5 7.5 13.5 9.9 L15.1 5 C16.5 7 17.4 9 17.6 11.3" stroke="#1e293b" stroke-width="1.35" stroke-linecap="round" stroke-linejoin="round" fill="none"/><circle cx="14.4" cy="15.6" r="3.9" fill="#2a6af7"/></svg>
<div class="a circ ctl" style="left:1073px;top:1006.0px;"></div><svg class="a" style="left:1079px;top:1011.5px;" width="20" height="20" viewBox="0 0 20 20" fill="none"><g stroke="#2a6af7" stroke-width="0.85" stroke-linecap="round" opacity="0.85"><path d="M0.6 2.6 L8.6 7.4"/><path d="M1.4 4.2 L8.4 8.8"/><path d="M2.4 6.0 L8.4 10.2"/><path d="M3.6 7.8 L8.6 11.2"/></g><path d="M7.6 6.8 C11 7.6 14.4 8.8 16.6 10.2 L17 11.2 C18.4 12 19.4 13.4 20 15 L18.2 14.6 L17.6 16 L16.4 15.5 L15.8 18.2 C14.6 17.2 13.4 16.4 12.2 16 L11.4 14.4 C10 13.6 9 12.2 8.4 10.6 Z" fill="#2a6af7"/><path d="M5.2 11.8 C7.2 13 9.6 13.8 12 14.2" stroke="#2a6af7" stroke-width="1.1" stroke-linecap="round" fill="none"/></svg>
<div class="a circ ctl" style="left:1097px;top:1006.0px;"></div><svg class="a" style="left:1096px;top:1005.0px;" width="34" height="34" viewBox="0 0 34 34" fill="none"><circle cx="17" cy="17" r="15.6" stroke="#2a6af7" stroke-width="1.5" stroke-dasharray="4.6 3.55" fill="none"/></svg><svg class="a" style="left:1103px;top:1011.5px;" width="20" height="20" viewBox="0 0 20 20" fill="none"><g fill="#2a6af7"><path d="M0.83 10.31 L7.39 3.75 L9.99 6.07 L3.43 12.77 Z"/><path d="M4.93 14.55 L12.45 3.75 L15.05 6.21 L7.53 17.28 Z"/><path d="M10.4 14.41 L16.55 7.85 L19.15 10.45 L12.45 17.28 Z"/></g></svg>
<div class="a circ ctl" style="left:1121px;top:1006.0px;"></div><svg class="a" style="left:1127px;top:1011.5px;" width="20" height="20" viewBox="0 0 20 20" fill="none"><path d="M10 0.9 C4.6 1.6 0.9 5.6 0.9 10.2 C0.9 15 4.8 18.8 10.8 19.4 C6.4 17.4 3.9 14.2 3.9 10.3 C3.9 6.3 6.3 2.9 10 0.9 Z" fill="#1d4ed8"/><g stroke="#1d4ed8" fill="none" stroke-linecap="round"><path d="M4.6 11.6 C5.2 5.4 12.6 1.8 18.2 7.2" stroke-width="1.2"/><path d="M7 6.6 C9.6 3.8 14.6 3.6 17.6 5.8" stroke-width="0.8"/></g></svg>
<div class="a" style="left:1206px;top:1020.0px;width:75px;height:4px;border-radius:2px;background:#e7e9ee"></div>
<div class="a" style="left:1206px;top:1020.0px;width:22px;height:4px;border-radius:2px;background:#1d4ed8"></div>
<div class="t" style="left:1293.6px;top:1015.35px;font-size:14px;color:#1e293b;font-weight:normal;letter-spacing:0.27px;-webkit-text-stroke:0.45px currentColor;">1.1</div>
<div class="t" style="left:1321.6px;top:1015.35px;font-size:14px;color:#334155;font-weight:normal;letter-spacing:0.3px;">Low</div>
</body></html>
